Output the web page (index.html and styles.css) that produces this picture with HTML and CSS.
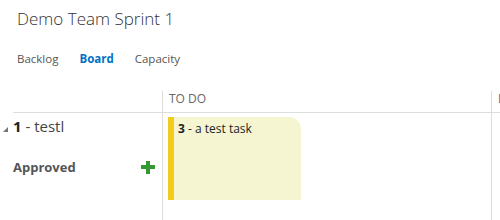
FILE: index.html
```html
<!DOCTYPE html>
<html>
<head>
<meta charset="utf-8">
<link rel="stylesheet" href="styles.css">
</head>
<body>
<header class="hub">
  <h1 class="title">Demo Team Sprint 1</h1>
  <nav class="tabs">
    <a class="tab">Backlog</a>
    <a class="tab active">Board</a>
    <a class="tab">Capacity</a>
  </nav>
</header>
<section class="board">
  <div class="head corner"></div>
  <div class="head col">TO DO</div>
  <div class="head col">IN PROGRESS</div>
  <div class="lane">
    <div class="lane-title"><span class="twisty"></span><b>1</b>&nbsp;- testl</div>
    <div class="lane-state">
      <span class="state">Approved</span>
      <span class="plus"></span>
    </div>
  </div>
  <div class="cell">
    <div class="card"><b>3</b> - a test task</div>
  </div>
  <div class="cell"></div>
</section>
</body>
</html>
```
FILE: styles.css
```css
html, body { margin: 0; padding: 0; background: #fff; }
body { font-family: "Segoe UI", "Open Sans", "Noto Sans", sans-serif; color: #333; width: 500px; height: 220px; overflow: hidden; }
.hub { padding-left: 17px; }
.title { margin: 0; padding-top: 7px; font-size: 17px; font-weight: 300; line-height: 24px; color: #333; }
.tabs { display: flex; gap: 21px; margin-top: 20px; font-size: 11.5px; line-height: 16px; }
.tab { color: #555; }
.tab.active { color: #0072c6; font-weight: 700; }
.board { display: grid; grid-template-columns: 149px 329px 1fr; margin-left: 13px; margin-top: 24px; }
.head { height: 21px; border-bottom: 1px solid #ddd; }
.col { border-left: 1px solid #ddd; padding-left: 6px; font-size: 12px; line-height: 16px; color: #666; white-space: nowrap; overflow: hidden; }
.lane { height: 110px; padding-top: 2px; }
.lane-title { display: flex; align-items: center; font-size: 15px; line-height: 22px; color: #444; }
.lane-title b { color: #222; }
.twisty { width: 0; height: 0; margin-left: -10px; margin-right: 5px; margin-top: 6px; border-style: solid; border-width: 0 0 5px 5px; border-color: transparent transparent #777 transparent; }
.lane-state { display: flex; align-items: center; justify-content: space-between; margin-top: 21px; padding-right: 7px; }
.state { font-size: 13px; font-weight: 700; color: #555; line-height: 18px; }
.plus { width: 14px; height: 13px; background:
  linear-gradient(#339933, #339933) center / 14px 4px no-repeat,
  linear-gradient(#339933, #339933) center / 4px 13px no-repeat; }
.cell { border-left: 1px solid #ddd; padding: 5px; padding-top: 4px; height: 106px; }
.card { width: 123px; height: 79px; background: #f5f5d2; border-left: 6px solid #f2cb1d; border-top-right-radius: 12px; padding: 4px 0 0 4px; font-size: 12px; line-height: 16px; color: #222; }
```
